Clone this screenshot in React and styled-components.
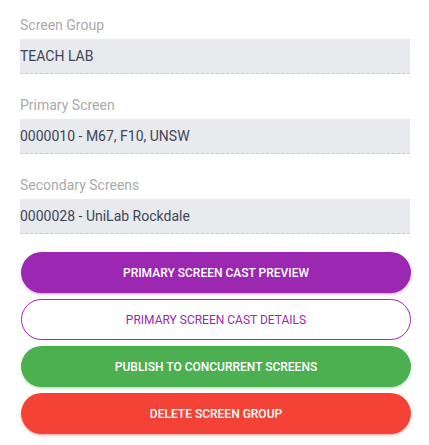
import React from 'react'
import styled, { createGlobalStyle } from 'styled-components'

const GlobalStyle = createGlobalStyle`
  body {
    margin: 0;
    background: #fff;
    font-family: Roboto, "Liberation Sans", sans-serif;
  }
`

const fields = [
  { label: 'Screen Group', value: 'TEACH LAB' },
  { label: 'Primary Screen', value: '0000010 - M67, F10, UNSW' },
  { label: 'Secondary Screens', value: '0000028 - UniLab Rockdale' },
]

const buttons = [
  { text: 'PRIMARY SCREEN CAST PREVIEW', color: '#9c27b0', rgb: '156, 39, 176' },
  { text: 'PRIMARY SCREEN CAST DETAILS', color: '#9c27b0', rgb: '156, 39, 176', outline: true },
  { text: 'PUBLISH TO CONCURRENT SCREENS', color: '#4caf50', rgb: '76, 175, 80' },
  { text: 'DELETE SCREEN GROUP', color: '#f44336', rgb: '244, 67, 54' },
]

function App() {
  return (
    <Page>
      <GlobalStyle />
      <Form>
        {fields.map((f) => (
          <Field key={f.label}>
            <Label>{f.label}</Label>
            <Value>{f.value}</Value>
          </Field>
        ))}
      </Form>
      <Actions>
        {buttons.map((b) => (
          <Button key={b.text} $color={b.color} $rgb={b.rgb} $outline={b.outline}>
            {b.text}
          </Button>
        ))}
      </Actions>
    </Page>
  )
}

export default App

const Page = styled.div`
  width: 429px;
  height: 445px;
  box-sizing: border-box;
  padding: 16px 19px 0 20px;
`

const Form = styled.div`
  display: flex;
  flex-direction: column;
  gap: 22px;
`

const Field = styled.div`
  display: flex;
  flex-direction: column;
`

const Label = styled.div`
  font-size: 14px;
  line-height: 18px;
  color: #aaaaaa;
  margin-bottom: 5px;
`

const Value = styled.div`
  height: 34px;
  display: flex;
  align-items: center;
  background: #e8eaed;
  border-bottom: 1px dashed #c9ccd0;
  font-size: 14px;
  color: #3c4858;
`

const Actions = styled.div`
  margin-top: 18px;
  padding-left: 1px;
  display: flex;
  flex-direction: column;
  gap: 6px;
`

const Button = styled.button`
  height: 41px;
  width: 390px;
  border-radius: 21px;
  box-sizing: border-box;
  font-family: Roboto, "Liberation Sans", sans-serif;
  font-size: 12px;
  cursor: pointer;
  display: flex;
  align-items: center;
  justify-content: center;
  padding: 0;
  ${(p) =>
    p.$outline
      ? `
    background: #fff;
    border: 1px solid ${p.$color};
    color: ${p.$color};
    font-weight: 400;
  `
      : `
    background: ${p.$color};
    border: none;
    color: #fff;
    font-weight: 500;
    box-shadow: 0 2px 2px 0 rgba(${p.$rgb}, 0.14), 0 3px 1px -2px rgba(${p.$rgb}, 0.2), 0 1px 5px 0 rgba(${p.$rgb}, 0.12);
  `}
`
